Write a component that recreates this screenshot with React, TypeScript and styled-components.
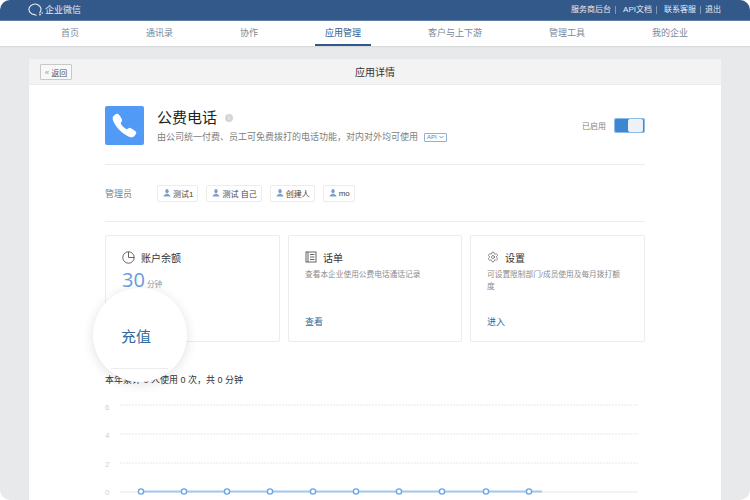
import React from "react";
import styled, { createGlobalStyle } from "styled-components";
import { IoCall } from "react-icons/io5";
import { Settings } from "lucide-react";

const GlobalStyle = createGlobalStyle`
    html, body {
        margin: 0;
        padding: 0;
        height: 500px;
        overflow: hidden;
        background: #ffffff;
    }

    * {
        box-sizing: border-box;
    }
`;

const Frame = styled.div`
    display: flex;
    flex-direction: column;

    width: 750px;
    height: 500px;
    overflow: hidden;

    border-radius: 10px;
    background: #e8e9eb;

    font-family: "Liberation Sans", "Noto Sans CJK SC", sans-serif;
`;

const TopBar = styled.div`
    display: flex;
    align-items: center;
    justify-content: space-between;
    flex: none;

    height: 21px;
    padding: 0 29px 1px 28px;

    border-bottom: 1px solid #5f80a8;
    background: #33588a;
    color: #e6ecf3;
`;

const Logo = styled.div`
    display: flex;
    align-items: center;
    gap: 1px;

    font-size: 9px;
`;

const TopLinks = styled.div`
    display: flex;
    align-items: center;

    font-size: 8px;
`;

const TopLink = styled.span<{ $first?: boolean, $last?: boolean }>`
    padding-left: ${props => props.$first ? "0" : props.$last ? "4px" : "7px"};
    padding-right: ${props => props.$last ? "0" : "4px"};

    line-height: 8px;
    border-left: ${props => props.$first ? "none" : "1px solid #7f9ab9"};
`;

const Nav = styled.div`
    display: flex;
    flex: none;
    gap: 47px;

    height: 25px;
    padding-left: 51px;

    background: #ffffff;
    box-shadow: 0 1px 1px #d9dadc;
`;

const NavItem = styled.div<{ $active?: boolean }>`
    padding: 0 10px;

    font-size: 9px;
    line-height: 24px;
    color: ${props => props.$active ? "#33588a" : "#7a8998"};
    border-bottom: 2px solid ${props => props.$active ? "#33588a" : "transparent"};
`;

const Sheet = styled.div`
    flex: none;

    width: 692px;
    height: 500px;
    margin: 13px 0 0 29px;

    border-radius: 2px 2px 0 0;
    background: #ffffff;
`;

const SheetHead = styled.div`
    position: relative;
    display: flex;
    align-items: center;
    justify-content: center;

    height: 26px;

    border-bottom: 1px solid #ececec;
    background: #f3f3f3;
    font-size: 10px;
    color: #333333;
`;

const BackButton = styled.div`
    position: absolute;
    left: 11px;
    top: 5px;

    display: flex;
    align-items: center;
    justify-content: center;
    gap: 2px;

    width: 32px;
    height: 16px;

    border: 1px solid #c8c8c8;
    border-radius: 1px;
    background: #f8f8f8;
    font-size: 8px;
    color: #555555;
`;

const BackArrow = styled.span`
    color: #999999;
`;

const Content = styled.div`
    position: relative;
    padding: 21px 76px 0 76px;
`;

const Hero = styled.div`
    display: flex;
    align-items: flex-start;

    height: 59px;

    border-bottom: 1px solid #ececec;
`;

const AppIcon = styled.div`
    display: flex;
    align-items: center;
    justify-content: center;
    flex: none;

    width: 39px;
    height: 39px;
    margin-right: 13px;

    border-radius: 2px;
    background: #519bf7;
    color: #ffffff;
`;

const HeroText = styled.div`
    flex: 1;
    padding-top: 1px;
`;

const AppName = styled.div`
    display: flex;
    align-items: center;
    gap: 8px;

    font-size: 15px;
    line-height: 22px;
    color: #222222;
`;

const InfoDot = styled.span`
    display: flex;
    align-items: center;
    justify-content: center;

    width: 8px;
    height: 8px;

    border-radius: 50%;
    background: #d5d5d5;
    font-size: 6px;
    line-height: 8px;
    color: #ffffff;
`;

const AppDesc = styled.div`
    display: flex;
    align-items: center;
    gap: 6px;

    margin-top: 2px;

    font-size: 9px;
    line-height: 12px;
    color: #808080;
`;

const ApiTag = styled.span`
    display: inline-flex;
    align-items: center;
    gap: 2px;

    height: 9px;
    padding: 0 2px;

    border: 1px solid #8fb0d3;
    border-radius: 1px;
    font-size: 6px;
    color: #5d84ad;
`;

const SwitchArea = styled.div`
    display: flex;
    align-items: center;
    gap: 8px;

    margin-top: 12px;

    font-size: 8px;
    color: #808080;
`;

const Toggle = styled.div`
    display: flex;
    justify-content: flex-end;

    width: 31px;
    height: 15px;
    padding: 1px 2px 1px 1px;

    border-radius: 3px;
    background: #3d87d0;
    box-shadow: 0 0 0 1px #8dbbea inset;
`;

const ToggleKnob = styled.div`
    width: 15px;
    height: 13px;

    border-radius: 2px;
    background: #eef1f6;
`;

const AdminRow = styled.div`
    display: flex;
    align-items: center;

    height: 57px;

    border-bottom: 1px solid #ececec;
`;

const AdminLabel = styled.div`
    width: 52px;

    font-size: 9px;
    color: #808080;
`;

const AdminTag = styled.div`
    display: flex;
    align-items: center;
    gap: 2px;

    height: 17px;
    margin-right: 8px;
    padding: 0 4px 0 5px;

    border: 1px solid #ececec;
    border-radius: 2px;
    font-size: 8px;
    color: #444444;
`;

const Cards = styled.div`
    display: grid;
    grid-template-columns: 175px 174px 175px;
    gap: 8px;

    margin-top: 13px;
`;

const Card = styled.div`
    display: flex;
    flex-direction: column;

    height: 107px;
    padding: 14px 17px 13px 16px;

    border: 1px solid #ececec;
    border-radius: 2px;
`;

const CardHead = styled.div`
    display: flex;
    align-items: center;
    gap: 6px;

    height: 14px;

    font-size: 10px;
    color: #333333;
`;

const CardDesc = styled.div`
    margin-top: 5px;

    font-size: 7.7px;
    line-height: 12px;
    color: #8c8c8c;
`;

const Balance = styled.div`
    display: flex;
    align-items: baseline;
    gap: 2px;

    margin-top: 2px;
`;

const BalanceValue = styled.span`
    font-family: "Open Sans", "Liberation Sans", sans-serif;
    font-size: 20px;
    font-weight: 400;
    line-height: 27px;
    color: #6a9be0;
`;

const BalanceUnit = styled.span`
    font-size: 7.7px;
    color: #999999;
`;

const CardLink = styled.div`
    margin-top: auto;

    font-size: 9px;
    line-height: 12px;
    color: #33689a;
`;

const Bubble = styled.div`
    position: absolute;
    left: 64px;
    top: 203px;

    display: flex;
    flex-direction: column;
    align-items: flex-start;

    width: 94px;
    height: 94px;
    padding: 39px 0 0 28px;

    border-radius: 50%;
    background: #ffffff;
    box-shadow: 0 2px 12px rgba(0, 0, 0, 0.12);
    font-size: 15px;
    line-height: 20px;
    color: #2f6a9f;
`;

const BubbleRule = styled.div`
    width: 57px;
    height: 1px;
    margin: 21px 0 0 -10px;

    background: #ececec;
`;

const Usage = styled.div`
    margin-top: 32px;

    font-size: 9px;
    line-height: 12px;
    color: #333333;
`;

const ChartBox = styled.svg`
    display: block;
    margin-top: 9px;
`;

const ChartLabel = styled.text`
    font-size: 8px;
    fill: #cfcfcf;
`;

function LogoIcon() {
    return (
        <svg width="16" height="14" viewBox="0 0 16 14" fill="none" stroke="#e6ecf3" strokeWidth="1.1">
            <path d="M11.5 9.8A6 5.3 0 1 0 6.5 11.6L8.5 12.4" />
            <circle cx="12" cy="11.5" r="0.9" fill="#e6ecf3" stroke="none" />
            <circle cx="14.3" cy="10" r="0.8" fill="#e6ecf3" stroke="none" />
        </svg>
    );
}

function ChevronIcon() {
    return (
        <svg width="5" height="4" viewBox="0 0 5 4" fill="none" stroke="#5d84ad" strokeWidth="0.8">
            <path d="M0.5 1L2.5 3L4.5 1" />
        </svg>
    );
}

function UserIcon() {
    return (
        <svg width="8" height="8" viewBox="0 0 8 8" fill="#7f9fc7">
            <ellipse cx="4" cy="2.2" rx="1.7" ry="2.1" />
            <path d="M0.5 7.5C0.5 5.8 2.5 5.6 3 4.8H5C5.5 5.6 7.5 5.8 7.5 7.5Z" />
        </svg>
    );
}

function ClockIcon() {
    return (
        <svg width="13" height="13" viewBox="0 0 13 13" fill="none" stroke="#555555" strokeWidth="0.9">
            <circle cx="6.5" cy="6.5" r="5.7" />
            <path d="M6.5 0.8V6.5H12.2" />
        </svg>
    );
}

function LedgerIcon() {
    return (
        <svg width="12" height="12" viewBox="0 0 12 12" fill="none" stroke="#555555" strokeWidth="0.9">
            <rect x="1" y="1" width="10" height="10" />
            <path d="M3 1V11M5 3.5H9.5M5 6H9.5M5 8.5H9.5" />
        </svg>
    );
}

const points = [36, 79, 122, 165, 208, 251, 294, 337, 381, 424];

function UsageChart() {
    return (
        <ChartBox width="540" height="110" viewBox="0 0 540 110">
            {[{ y: 10, textY: 15, label: "6" }, { y: 39, textY: 43, label: "4" }, { y: 68, textY: 72, label: "2" }].map((line) => (
                <g key={line.label}>
                    <ChartLabel x="0" y={line.textY}>{line.label}</ChartLabel>
                    <line x1="15" x2="533" y1={line.y} y2={line.y} stroke="#e8e8e8" strokeWidth="1" strokeDasharray="2 1" />
                </g>
            ))}
            <ChartLabel x="0" y="100">0</ChartLabel>
            <line x1="15" x2="533" y1="97" y2="97" stroke="#e8e8e8" strokeWidth="1" />
            <line x1="36" x2="437" y1="96.5" y2="96.5" stroke="#a5c8ec" strokeWidth="2" />
            {points.map((x) => (
                <circle key={x} cx={x} cy="96.5" r="2.6" fill="#ffffff" stroke="#6aa5e8" strokeWidth="1.4" />
            ))}
        </ChartBox>
    );
}

export default function App() {
    return (
        <>
            <GlobalStyle />
            <Frame>
                <TopBar>
                    <Logo>
                        <LogoIcon />
                        企业微信
                    </Logo>
                    <TopLinks>
                        <TopLink $first>服务商后台</TopLink>
                        <TopLink>API文档</TopLink>
                        <TopLink>联系客服</TopLink>
                        <TopLink $last>退出</TopLink>
                    </TopLinks>
                </TopBar>
                <Nav>
                    <NavItem>首页</NavItem>
                    <NavItem>通讯录</NavItem>
                    <NavItem>协作</NavItem>
                    <NavItem $active>应用管理</NavItem>
                    <NavItem>客户与上下游</NavItem>
                    <NavItem>管理工具</NavItem>
                    <NavItem>我的企业</NavItem>
                </Nav>
                <Sheet>
                    <SheetHead>
                        <BackButton><BackArrow>«</BackArrow>返回</BackButton>
                        应用详情
                    </SheetHead>
                    <Content>
                        <Hero>
                            <AppIcon>
                                <IoCall size={27} />
                            </AppIcon>
                            <HeroText>
                                <AppName>
                                    公费电话
                                    <InfoDot>i</InfoDot>
                                </AppName>
                                <AppDesc>
                                    由公司统一付费、员工可免费拨打的电话功能，对内对外均可使用
                                    <ApiTag>API<ChevronIcon /></ApiTag>
                                </AppDesc>
                            </HeroText>
                            <SwitchArea>
                                已启用
                                <Toggle>
                                    <ToggleKnob />
                                </Toggle>
                            </SwitchArea>
                        </Hero>
                        <AdminRow>
                            <AdminLabel>管理员</AdminLabel>
                            <AdminTag><UserIcon />测试1</AdminTag>
                            <AdminTag><UserIcon />测试 自己</AdminTag>
                            <AdminTag><UserIcon />创建人</AdminTag>
                            <AdminTag><UserIcon />mo</AdminTag>
                        </AdminRow>
                        <Cards>
                            <Card>
                                <CardHead><ClockIcon />账户余额</CardHead>
                                <Balance>
                                    <BalanceValue>30</BalanceValue>
                                    <BalanceUnit>分钟</BalanceUnit>
                                </Balance>
                            </Card>
                            <Card>
                                <CardHead><LedgerIcon />话单</CardHead>
                                <CardDesc>查看本企业使用公费电话通话记录</CardDesc>
                                <CardLink>查看</CardLink>
                            </Card>
                            <Card>
                                <CardHead><Settings size={12} strokeWidth={1.3} color="#555555" />设置</CardHead>
                                <CardDesc>可设置限制部门/成员使用及每月拨打额度</CardDesc>
                                <CardLink>进入</CardLink>
                            </Card>
                        </Cards>
                        <Usage>本年累计 0 人使用 0 次，共 0 分钟</Usage>
                        <UsageChart />
                        <Bubble>
                            充值
                            <BubbleRule />
                        </Bubble>
                    </Content>
                </Sheet>
            </Frame>
        </>
    );
}
